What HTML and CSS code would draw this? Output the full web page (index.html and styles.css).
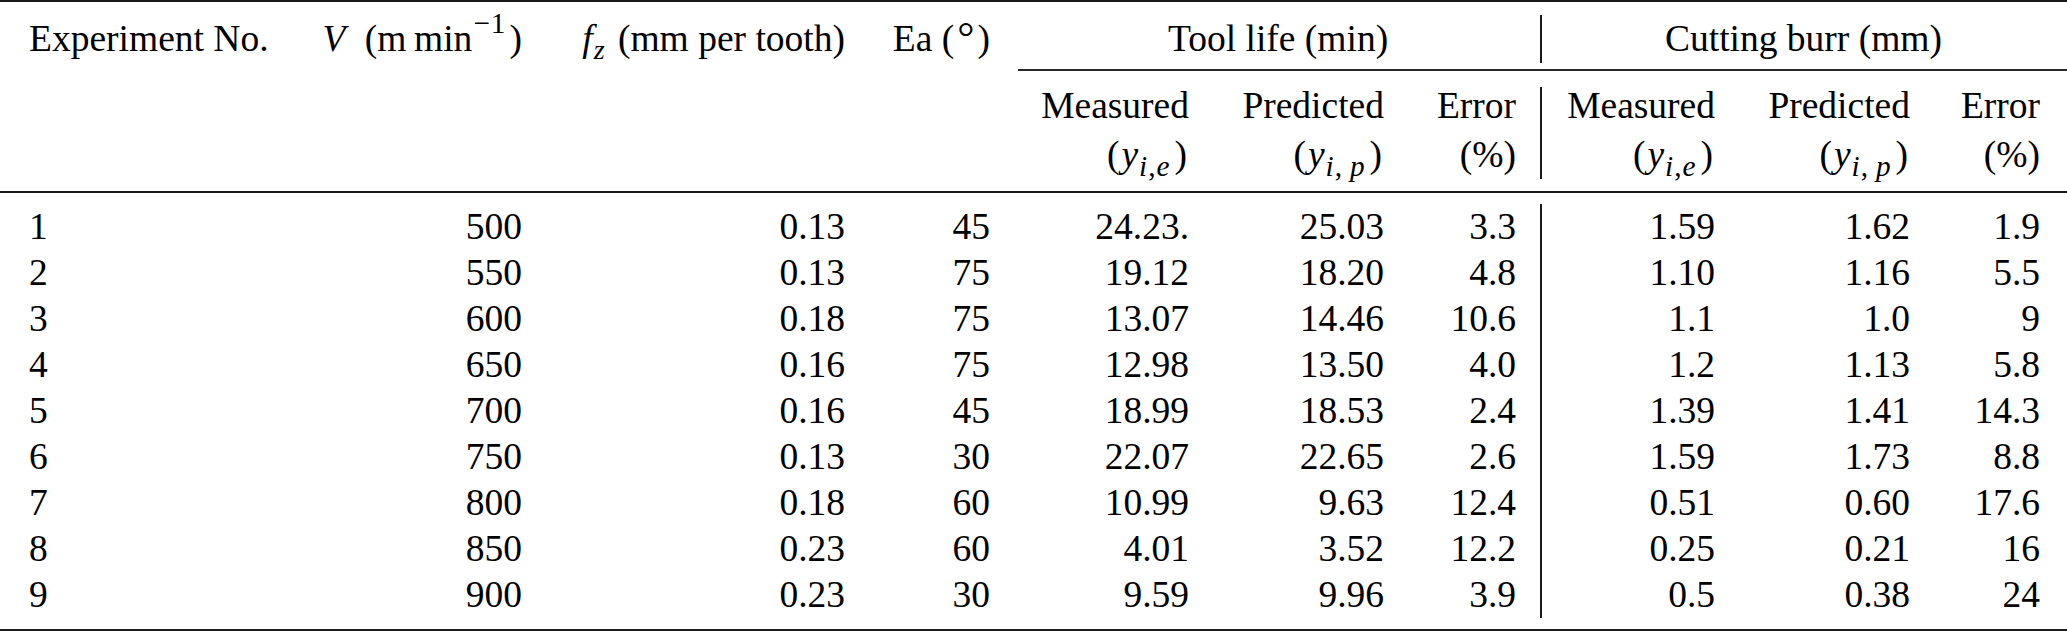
FILE: index.html
```html
<!DOCTYPE html>
<html>
<head>
<meta charset="utf-8">
<link rel="stylesheet" href="styles.css">
</head>
<body>
<table class="tbl">
  <colgroup>
    <col class="w1"><col class="w2"><col class="w3"><col class="w4"><col class="w5"><col class="w6"><col class="w7"><col class="wvr"><col class="w8"><col class="w9"><col class="w10">
  </colgroup>
  <tr class="rule"><td colspan="11"></td></tr>
  <tr class="sp sp1"><td colspan="11"></td></tr>
  <tr class="h1">
    <td class="l">Experiment No.</td>
    <td><i class="mv">V</i> (m&#8201;min<sup class="inv">−1</sup>)</td>
    <td><i class="mf">f</i><sub class="mz"><i>z</i></sub> (mm per tooth)</td>
    <td class="ea">Ea (<span class="deg">°</span>)</td>
    <td colspan="3" class="grp grp-tool">Tool life (min)</td>
    <td class="vr"></td>
    <td colspan="3" class="grp grp-burr">Cutting burr (mm)</td>
  </tr>
  <tr class="sp sp2"><td colspan="11"></td></tr>
  <tr class="rule thin"><td colspan="4" class="blank"></td><td colspan="7"></td></tr>
  <tr class="sp sp3"><td colspan="11"></td></tr>
  <tr class="h2">
    <td></td><td></td><td></td><td></td>
    <td>Measured<br><span class="p">(</span><i class="my">y</i><sub class="ms"><i>i</i>,<i>e</i></sub><span class="p">)</span></td>
    <td>Predicted<br><span class="p">(</span><i class="my">y</i><sub class="ms"><i>i</i>,&#8201;<i>p</i></sub><span class="p">)</span></td>
    <td>Error<br>(%)</td>
    <td class="vr vr-h2"></td>
    <td>Measured<br><span class="p">(</span><i class="my">y</i><sub class="ms"><i>i</i>,<i>e</i></sub><span class="p">)</span></td>
    <td>Predicted<br><span class="p">(</span><i class="my">y</i><sub class="ms"><i>i</i>,&#8201;<i>p</i></sub><span class="p">)</span></td>
    <td class="last">Error<br>(%)</td>
  </tr>
  <tr class="sp sp4"><td colspan="11"></td></tr>
  <tr class="rule"><td colspan="11"></td></tr>
  <tr class="sp sp5"><td colspan="11"></td></tr>
  <tr class="d"><td class="l">1</td><td>500</td><td>0.13</td><td class="ea">45</td><td>24.23.</td><td>25.03</td><td>3.3</td><td class="vr"></td><td>1.59</td><td>1.62</td><td class="last">1.9</td></tr>
  <tr class="d"><td class="l">2</td><td>550</td><td>0.13</td><td class="ea">75</td><td>19.12</td><td>18.20</td><td>4.8</td><td class="vr"></td><td>1.10</td><td>1.16</td><td class="last">5.5</td></tr>
  <tr class="d"><td class="l">3</td><td>600</td><td>0.18</td><td class="ea">75</td><td>13.07</td><td>14.46</td><td>10.6</td><td class="vr"></td><td>1.1</td><td>1.0</td><td class="last">9</td></tr>
  <tr class="d"><td class="l">4</td><td>650</td><td>0.16</td><td class="ea">75</td><td>12.98</td><td>13.50</td><td>4.0</td><td class="vr"></td><td>1.2</td><td>1.13</td><td class="last">5.8</td></tr>
  <tr class="d"><td class="l">5</td><td>700</td><td>0.16</td><td class="ea">45</td><td>18.99</td><td>18.53</td><td>2.4</td><td class="vr"></td><td>1.39</td><td>1.41</td><td class="last">14.3</td></tr>
  <tr class="d"><td class="l">6</td><td>750</td><td>0.13</td><td class="ea">30</td><td>22.07</td><td>22.65</td><td>2.6</td><td class="vr"></td><td>1.59</td><td>1.73</td><td class="last">8.8</td></tr>
  <tr class="d"><td class="l">7</td><td>800</td><td>0.18</td><td class="ea">60</td><td>10.99</td><td>9.63</td><td>12.4</td><td class="vr"></td><td>0.51</td><td>0.60</td><td class="last">17.6</td></tr>
  <tr class="d"><td class="l">8</td><td>850</td><td>0.23</td><td class="ea">60</td><td>4.01</td><td>3.52</td><td>12.2</td><td class="vr"></td><td>0.25</td><td>0.21</td><td class="last">16</td></tr>
  <tr class="d"><td class="l">9</td><td>900</td><td>0.23</td><td class="ea">30</td><td>9.59</td><td>9.96</td><td>3.9</td><td class="vr"></td><td>0.5</td><td>0.38</td><td class="last">24</td></tr>
  <tr class="sp sp6"><td colspan="11"></td></tr>
  <tr class="rule"><td colspan="11"></td></tr>
</table>
</body>
</html>
```

FILE: styles.css
```css
html, body {
  margin: 0;
  padding: 0;
  background: #ffffff;
}

.tbl {
  width: 2067px;
  table-layout: fixed;
  border-collapse: collapse;
  border-spacing: 0;
  font-family: "Liberation Serif", "Times New Roman", serif;
  font-size: 37.5px;
  color: #000;
}

.w1 { width: 290px; }
.w2 { width: 232px; }
.w3 { width: 323px; }
.w4 { width: 173px; }
.w5 { width: 171px; }
.w6 { width: 195px; }
.w7 { width: 132px; }
.wvr { width: 50px; }
.w8 { width: 149px; }
.w9 { width: 195px; }
.w10 { width: 157px; }

.tbl td {
  padding: 0;
  text-align: right;
  white-space: nowrap;
  vertical-align: middle;
}

.tbl td.l {
  text-align: left;
  padding-left: 29px;
}

.tbl td.ea { padding-right: 28px; }
.tbl td.last { padding-right: 27px; }

.rule td { height: 2px; background: #1a1a1a; }
.rule.thin td { height: 2px; background: #262626; }
.rule td.blank { background: transparent; }

.sp td { padding: 0; }
.sp1 td { height: 13px; }
.sp2 td { height: 6px; }
.sp3 td { height: 10px; }
.sp4 td { height: 12px; }
.sp5 td { height: 11px; }
.sp6 td { height: 11px; }

.h1 td { height: 48px; line-height: 48px; }
.grp { text-align: center !important; }
.grp-tool { padding-left: 22px !important; }
.grp-burr { padding-right: 26px !important; }

.h2 td { line-height: 49px; height: 98px; }

.d td { height: 46px; line-height: 46px; }

.vr {
  background: linear-gradient(#1a1a1a, #1a1a1a) no-repeat center top / 2px 100%;
}
.vr-h2 {
  background-position: center bottom;
  background-size: 2px calc(100% - 6px);
}

.mv { margin-right: 10px; }
.inv {
  font-size: 0.78em;
  line-height: 0;
  vertical-align: 0.6em;
  margin-left: 1px;
  margin-right: 3px;
  letter-spacing: 1px;
}
.mf { margin-right: 1px; }
.mz {
  font-size: 0.75em;
  line-height: 0;
  vertical-align: -0.3em;
  margin-right: 4px;
}
.deg {
  font-size: 1.15em;
  line-height: 0;
  margin: 0 3px;
}
.p { margin: 0 2px; }
.my { margin-right: 1px; }
.ms {
  font-size: 0.78em;
  line-height: 0;
  vertical-align: -0.3em;
  letter-spacing: 1px;
  margin-right: 2px;
}
```
